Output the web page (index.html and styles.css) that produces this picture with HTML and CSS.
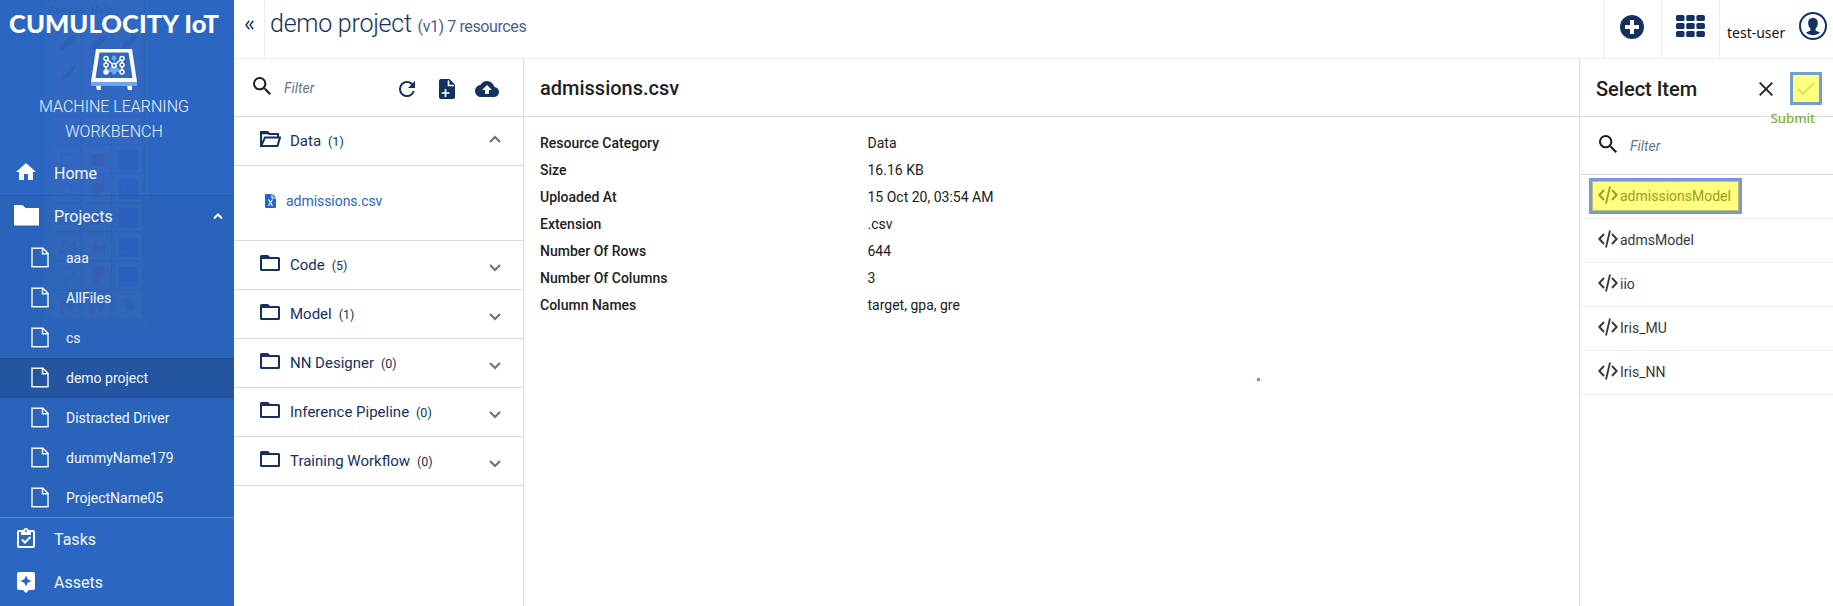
FILE: index.html
```
<!DOCTYPE html>
<html lang="en">
<head>
<meta charset="utf-8">
<title>Machine Learning Workbench</title>
<link rel="stylesheet" href="styles.css">
</head>
<body>
<svg class="defs" width="0" height="0">
  <symbol id="file" viewBox="0 0 18 21"><path d="M1 1.200h11l5 5v13.600H1z M11.500 1.500v5.200H17" fill="none" stroke="currentColor" stroke-width="1.500"/></symbol>
  <symbol id="folder" viewBox="0 0 20 16"><path d="M0 1.500Q0 0 1.500 0H8l2 2h8.500Q20 2 20 3.500v11Q20 16 18.500 16h-17Q0 16 0 14.500zM2 4v10h16V4z" fill="currentColor" fill-rule="evenodd"/></symbol>
  <symbol id="search" viewBox="3 3 17.500 17.500"><path d="M15.500 14h-.79l-.28-.27A6.471 6.471 0 0 0 16 9.500 6.500 6.500 0 1 0 9.500 16c1.610 0 3.090-.59 4.230-1.570l.27.28v.79l5 4.990L20.490 19l-4.990-5zm-6 0C7.010 14 5 11.990 5 9.500S7.010 5 9.500 5 14 7.010 14 9.500 11.990 14 9.500 14z" fill="currentColor"/></symbol>
  <symbol id="chev" viewBox="0 0 12 8"><path d="M1 1l5 5 5-5" fill="none" stroke="currentColor" stroke-width="2.200"/></symbol>
  <symbol id="code" viewBox="0 0 20 18"><path d="M6 4L1.300 9 6 14M14 4l4.700 5L14 14" fill="none" stroke="currentColor" stroke-width="2"/><path d="M12 .5L8 17.500" stroke="currentColor" stroke-width="1.800"/></symbol>
</svg>
<div class="app">
  <nav class="side">
    <svg class="ghost" width="104" height="325" viewBox="45 0 104 325">
      <defs>
        <pattern id="cells" x="53" y="31" width="31" height="29" patternUnits="userSpaceOnUse"><rect x="0" y="0" width="27" height="26" fill="#3b6cb9" opacity=".35"/><path d="M0 26.500h27.500V0" fill="none" stroke="#2456a5" opacity=".35"/></pattern>
      </defs>
      <path d="M45 0h104v325H45z" fill="#4675bd" opacity=".25"/>
      <path d="M49.500 0v322h95V0" fill="none" stroke="#2860b4" opacity=".5"/>
      <path d="M53 31h91v288H53z" fill="url(#cells)"/>
      <text x="49" y="13" class="ghost-text">Canvas</text><text x="91" y="13" class="ghost-text">Help</text>
      <g fill="none" stroke="#1e539f" opacity=".4">
        <path d="M134 4h10v14h-10z" stroke-dasharray="2 2"/>
        <path d="M60 50q4-12 16-15-1 9-16 15M91 50q4-12 16-15-1 9-16 15M121 50q4-12 16-15-1 9-16 15M60 80l7-7 8-8-3 9-9 5" fill="#1e539f"/>
        <path d="M60 108l14-13M92 108l14-13M58 130h14l-5-5v10l5-5M61.500 154.500h11v11h-11z"/><circle cx="67" cy="189" r="5.500"/>
        <path d="M62 214l10-3 3 7-5 6-10-1zM60 253l4-11 5 5 6-5-1 12-5-4zM61 273q4-7 11-3 5 4-3 9-5 4-3 7"/>
      </g>
      <g fill="#4a4b99" opacity=".4"><path d="M92 154h12v12H92z"/><circle cx="98" cy="189" r="6"/><path d="M92 214l10-3 3 7-5 6-10-1zM91 253l4-11 5 5 6-5-1 12-5-4zM92 270q4-5 12-2 5 4-4 10-1 6-7 6zM60 300h5v14h-5zM90 300h5v14h-5z"/></g>
      <g fill="#1d50c0" opacity=".4"><path d="M119 150h19v20h-19zM119 179h19v20h-19zM119 208h19v20h-19zM119 238h19v19h-19zM119 267h19v19h-19z"/></g>
      <g fill="#2557a0" opacity=".4"><path d="M63 301l6-4 6 10-6 6zM94 301l6-4 6 10-6 6zM122 301l6-4 8 10-6 6z"/></g>
      <g fill="none" stroke="#547fc0" stroke-dasharray="1 1.500" opacity=".5"><path d="M123 155h11v10h-11zM123 214l10-3 2 7-4 6-9-1zM122 253l4-11 5 5 5-5v12l-5-4z"/><circle cx="128.500" cy="189" r="5"/></g>
    </svg>
    <div class="brand">
      <div class="logo">CUMULOCITY IoT</div>
      <svg class="ml" width="46" height="41" viewBox="0 0 46 41">
        <path d="M0 33h46v4H0z" fill="#6aa9ee"/><path d="M5 37h5v4H6zM36 37h5v4h-4z" fill="#fff"/>
        <path d="M5 0h36l5 33H0zM8.500 3.500L4.500 29h37l-4-25.500z" fill="#fff" fill-rule="evenodd"/>
        <g stroke="#6aa9ee" fill="#6aa9ee"><path d="M15 23l8-7 8 7M23 9v14" stroke-width="1"/><circle cx="23" cy="9" r="2"/><circle cx="23" cy="23" r="2"/></g>
        <g stroke="#fff" fill="#2b65c2" stroke-width="1.500"><path d="M15 23V9.500l8 7 8-7V23" fill="none"/><circle cx="15" cy="9.500" r="2"/><circle cx="31" cy="9.500" r="2"/><circle cx="15" cy="16" r="2"/><circle cx="31" cy="16" r="2"/><circle cx="23" cy="16.500" r="2"/><circle cx="15" cy="23" r="2" fill="#fff"/><circle cx="31" cy="23" r="2"/></g>
      </svg>
      <div class="product">MACHINE LEARNING<br>WORKBENCH</div>
    </div>
    <a class="item"><span class="ic"><svg class="i-home" width="20" height="17" viewBox="2 3 20 17"><path d="M10 20v-6h4v6h5v-8h3L12 3 2 12h3v8z" fill="#fff"/></svg></span>Home</a>
    <div class="group">
      <a class="item"><span class="ic"><svg class="i-folder" width="25" height="21" viewBox="0 0 25 21"><path d="M0 0h8.500l3 3H25v17.500H0z" fill="#fff"/></svg></span>Projects<svg class="caret" width="10" height="7"><path d="M1 5.500l4-4 4 4" fill="none" stroke="#fff" stroke-width="2"/></svg></a>
      <a class="sub"><svg width="18" height="21"><use href="#file"/></svg>aaa</a>
      <a class="sub"><svg width="18" height="21"><use href="#file"/></svg>AllFiles</a>
      <a class="sub"><svg width="18" height="21"><use href="#file"/></svg>cs</a>
      <a class="sub on"><svg width="18" height="21"><use href="#file"/></svg>demo project</a>
      <a class="sub"><svg width="18" height="21"><use href="#file"/></svg>Distracted Driver</a>
      <a class="sub"><svg width="18" height="21"><use href="#file"/></svg>dummyName179</a>
      <a class="sub"><svg width="18" height="21"><use href="#file"/></svg>ProjectName05</a>
    </div>
    <a class="item"><span class="ic"><svg class="i-task" width="18" height="20" viewBox="0 0 18 20"><path d="M2 2h4.200a3 3 0 0 1 5.600 0H16q2 0 2 2v14q0 2-2 2H2q-2 0-2-2V4q0-2 2-2zm0 2v14h14V4h-2v3H4V4zm7-2a1 1 0 1 0 .01 0z" fill="#fff" fill-rule="evenodd"/><path d="M5 11.500l3 3L13.500 9" fill="none" stroke="#fff" stroke-width="2"/></svg></span>Tasks</a>
    <a class="item"><span class="ic"><svg class="i-asset" width="18" height="21" viewBox="0 0 18 21"><path d="M2 0h14q2 0 2 2v14q0 2-2 2h-4l-3 3-3-3H2q-2 0-2-2V2Q0 0 2 0zm7 3.500L7.300 7.300 3.500 9l3.800 1.700L9 14.500l1.700-3.800L14.500 9l-3.800-1.700z" fill="#fff" fill-rule="evenodd"/></svg></span>Assets</a>
  </nav>
  <div class="main">
    <header class="top">
      <div class="collapse"><svg width="9" height="10"><path d="M4.300.8L1 5l3.300 4.200M8.300.8L5 5l3.300 4.200" fill="none" stroke="#16325f" stroke-width="1.400"/></svg></div>
      <h1 class="title">demo project <small>(v1) 7 resources</small></h1>
      <div class="cell"><svg width="24" height="24"><circle cx="12" cy="12" r="12" fill="#14315f"/><path d="M12 5v14M5 12h14" stroke="#fff" stroke-width="4"/></svg></div>
      <div class="cell apps"><svg width="29" height="22" fill="#14315f"><rect width="8.500" height="6" rx="1.500"/><rect x="10.200" width="8.500" height="6" rx="1.500"/><rect x="20.400" width="8.500" height="6" rx="1.500"/><rect y="8" width="8.500" height="6" rx="1.500"/><rect x="10.200" y="8" width="8.500" height="6" rx="1.500"/><rect x="20.400" y="8" width="8.500" height="6" rx="1.500"/><rect y="16" width="8.500" height="6" rx="1.500"/><rect x="10.200" y="16" width="8.500" height="6" rx="1.500"/><rect x="20.400" y="16" width="8.500" height="6" rx="1.500"/></svg></div>
      <div class="user"><span>test-user</span><svg width="28" height="28"><circle cx="14" cy="14" r="13" fill="none" stroke="#14315f" stroke-width="2"/><path d="M14 6c3.500 0 5 2.300 4.800 5.500-.2 2.500-1.200 4.200-2.300 5.300v1.700l4.500 2c-2 2-4.500 2.700-7 2.700s-5-.7-7-2.700l4.500-2v-1.700c-1.100-1.100-2.100-2.800-2.300-5.300C9 8.300 10.500 6 14 6z" fill="#14315f"/></svg></div>
    </header>
    <div class="cols">
      <section class="res">
        <div class="tools">
          <svg class="s" width="18" height="18"><use href="#search"/></svg><span class="ph">Filter</span>
          <svg class="refresh" width="16" height="16" viewBox="4 4 16 16"><path d="M17.650 6.350A7.958 7.958 0 0 0 12 4a8 8 0 1 0 7.730 10h-2.080A5.990 5.990 0 0 1 12 18c-3.310 0-6-2.690-6-6s2.690-6 6-6c1.660 0 3.140.69 4.220 1.780L13 11h7V4z" fill="#14315f"/></svg>
          <svg class="add" width="16" height="20"><path d="M2 0h8.500L16 5.500V18q0 2-2 2H2q-2 0-2-2V2Q0 0 2 0z" fill="#14315f"/><path d="M9.500 1.500v5H15M6.500 10v8M2.500 14h8" fill="none" stroke="#fff" stroke-width="1.700"/></svg>
          <svg class="cloud" width="24" height="16" viewBox="0 4 24 16"><path d="M19.350 10.040A7.490 7.490 0 0 0 12 4C9.110 4 6.600 5.640 5.350 8.040A5.994 5.994 0 0 0 0 14c0 3.310 2.690 6 6 6h13c2.760 0 5-2.240 5-5 0-2.640-2.050-4.780-4.650-4.960zM14 13v4h-4v-4H7l5-5 5 5h-3z" fill="#14315f"/></svg>
        </div>
        <div class="acc open"><svg width="21" height="16" viewBox="0 0 21 16"><path d="M1 15V1h6.500l2 2h8.500v2.500M1 15L5 6.500h15L17.500 15z" fill="none" stroke="#14315f" stroke-width="2"/><path d="M1 1h7l1.500 2.200H1z" fill="#14315f"/></svg>Data<small>(1)</small><svg class="ch up" width="12" height="8"><use href="#chev"/></svg></div>
        <div class="csv"><svg width="11" height="14"><path d="M1 0h6.500L11 3.500V13q0 1-1 1H1q-1 0-1-1V1q0-1 1-1z" fill="#2766c4"/><path d="M7 .5V4h4M3.500 5.500l4 6.500M7.500 5.500l-4 6.500" fill="none" stroke="#fff" stroke-width="1.100"/></svg>admissions.csv</div>
        <div class="acc"><svg width="20" height="16"><use href="#folder"/></svg>Code<small>(5)</small><svg class="ch" width="12" height="8"><use href="#chev"/></svg></div>
        <div class="acc"><svg width="20" height="16"><use href="#folder"/></svg>Model<small>(1)</small><svg class="ch" width="12" height="8"><use href="#chev"/></svg></div>
        <div class="acc"><svg width="20" height="16"><use href="#folder"/></svg>NN Designer<small>(0)</small><svg class="ch" width="12" height="8"><use href="#chev"/></svg></div>
        <div class="acc"><svg width="20" height="16"><use href="#folder"/></svg>Inference Pipeline<small>(0)</small><svg class="ch" width="12" height="8"><use href="#chev"/></svg></div>
        <div class="acc"><svg width="20" height="16"><use href="#folder"/></svg>Training Workflow<small>(0)</small><svg class="ch" width="12" height="8"><use href="#chev"/></svg></div>
      </section>
      <section class="detail">
        <h2 class="head">admissions.csv</h2>
        <dl class="props">
          <dt>Resource Category</dt><dd>Data</dd>
          <dt>Size</dt><dd>16.16 KB</dd>
          <dt>Uploaded At</dt><dd>15 Oct 20, 03:54 AM</dd>
          <dt>Extension</dt><dd>.csv</dd>
          <dt>Number Of Rows</dt><dd>644</dd>
          <dt>Number Of Columns</dt><dd>3</dd>
          <dt>Column Names</dt><dd>target, gpa, gre</dd>
        </dl>
        <i class="dot"></i>
      </section>
      <section class="pick">
        <div class="pick-head"><h2>Select Item</h2><svg class="x" width="14" height="14"><path d="M.7.7l12.600 12.600M13.300.7L.7 13.300" stroke="#212121" stroke-width="1.900"/></svg><span class="ok"><svg width="18" height="13"><path d="M1 7l5 5L17 1" fill="none" stroke="#dede5c" stroke-width="1.800"/></svg></span><span class="tip">Submit</span></div>
        <div class="find"><svg class="s" width="18" height="18"><use href="#search"/></svg><span class="ph">Filter</span></div>
        <div class="opt hl"><svg width="20" height="18"><use href="#code"/></svg>admissionsModel</div>
        <div class="opt"><svg width="20" height="18"><use href="#code"/></svg>admsModel</div>
        <div class="opt"><svg width="20" height="18"><use href="#code"/></svg>iio</div>
        <div class="opt"><svg width="20" height="18"><use href="#code"/></svg>Iris_MU</div>
        <div class="opt"><svg width="20" height="18"><use href="#code"/></svg>Iris_NN</div>
      </section>
    </div>
  </div>
</div>
</body>
</html>
```
FILE: styles.css
```
*, *::before { box-sizing: border-box; }
body { margin: 0; font-family: Roboto, sans-serif; color: #212121; background: #fff; overflow: hidden; }
h1, h2, dl, dd { margin: 0; }
svg { flex: none; display: block; }
.defs { position: absolute; }
.app { display: flex; height: 606px; }

.side { position: relative; width: 234px; flex: none; background: #2b66c3; color: #fff; }
.ghost { position: absolute; left: 45px; top: 0; z-index: 1; opacity: .7; }
.ghost-text { font: 9.500px "DejaVu Sans", sans-serif; fill: #2456a5; opacity: .8; }
.brand, .item, .sub { position: relative; z-index: 2; }
.brand { height: 152px; display: flex; flex-direction: column; align-items: center; }
.logo { height: 49px; padding-top: 8px; padding-right: 6px; font: 900 25.500px/30px Lato, sans-serif; white-space: nowrap; letter-spacing: .1px; }
.ml { margin-right: 6px; }
.product { margin-top: 4px; padding-right: 6px; font-size: 16px; font-weight: 300; line-height: 25px; text-align: center; color: #e9effa; }
.item { display: flex; align-items: center; height: 43px; font-size: 16px; color: #f2f6fc; }
.ic { width: 54px; padding-left: 14px; display: flex; }
.i-home, .i-task, .i-asset { margin-left: 3px; }
.i-home { margin-left: 2px; margin-top: -4px; }
.i-folder { margin-top: -1px; }
.i-task { margin-top: -3px; }
.caret { margin-left: auto; margin-right: 11px; }
.group { background: #2963ba; border-top: 1px solid #2456a4; border-bottom: 1px solid #5383ce; height: 323px; }
.sub { display: flex; align-items: center; height: 40px; padding: 0 0 1px 31px; gap: 17px; font-size: 14px; color: #f2f6fc; }
.sub svg { margin-top: -1px; }
.group .item { height: 42px; padding-bottom: 2px; }
.on { background: #2355a1; border-top: 1px solid #1d4685; padding-bottom: 2px; }

.main { flex: 1; display: flex; flex-direction: column; min-width: 0; }
.top { height: 59px; display: flex; border-bottom: 1px solid #eee; flex: none; }
.collapse { width: 31px; border-right: 1px solid #eee; padding: 20px 0 0 11px; }
.title { flex: 1; padding-left: 5px; font-size: 25px; font-weight: 300; letter-spacing: -.25px; line-height: 48px; color: #14315f; white-space: nowrap; }
.title small { font-size: 16px; font-weight: 400; letter-spacing: -.4px; color: #465f8d; }
.cell { width: 58px; border-left: 1px solid #eee; padding: 15px 0 0 16px; }
.apps { padding-left: 14px; }
.user { width: 114px; border-left: 1px solid #eee; display: flex; padding: 12px 6px 0 7px; justify-content: space-between; font: 14px/20px "Noto Sans", sans-serif; color: #111; }
.user span { padding-top: 11px; }

.cols { flex: 1; display: flex; }
.res { width: 290px; border-right: 1px solid #dcdcdc; flex: none; }
.tools { height: 58px; border-bottom: 1px solid #dcdcdc; display: flex; align-items: center; padding: 2px 0 0 19px; }
.s { color: #1c1c1c; }
.tools .s { margin-top: -6px; }
.ph { font-size: 14px; font-style: italic; color: #67788f; margin-left: 13px; }
.tools .ph { width: 115px; margin-top: -2px; }
.refresh { margin-right: 24px; }
.add { margin-right: 20px; }
.acc { height: 49px; border-bottom: 1px solid #dcdcdc; display: flex; align-items: center; padding: 0 22px 0 26px; font-size: 15px; color: #14315f; }
.acc svg:first-child { margin: -5px 10px 0 0; }
.acc.open svg:first-child { margin-right: 9px; }
.acc small { font-size: 12.500px; margin: 1px 0 0 7px; }
.acc .ch { margin-left: auto; margin-top: 5px; color: #757575; width: 12px; }
.acc .ch.up { transform: rotate(180deg); margin-top: -4px; }
.csv { height: 75px; border-bottom: 1px solid #dcdcdc; display: flex; align-items: center; gap: 10px; padding: 0 0 5px 31px; font-size: 14px; letter-spacing: -.05px; color: #2766c4; }

.detail { flex: 1; position: relative; }
.head, .pick-head h2 { font-size: 20px; font-weight: 500; }
.head { height: 58px; line-height: 59px; padding-left: 16px; border-bottom: 1px solid #dcdcdc; }
.props { display: grid; grid-template-columns: 327.500px 1fr; grid-auto-rows: 27px; padding: 13px 0 0 16px; font-size: 14px; line-height: 27px; }
.props dt { font-weight: 500; }
.dot { position: absolute; left: 733px; top: 319px; width: 3px; height: 3px; background: #8a80ff; }

.pick { width: 254px; border-left: 1px solid #dcdcdc; flex: none; }
.pick-head { position: relative; height: 58px; border-bottom: 1px solid #dcdcdc; display: flex; align-items: center; padding: 2px 0 0 16px; }
.x { margin-left: auto; margin-right: 17px; }
.ok { width: 32px; height: 33px; margin-right: 11px; border: 3px solid #729fcf; background: #ffff80; display: flex; align-items: center; justify-content: center; }
.tip { position: absolute; right: 18px; top: 51px; font: 400 13px/16px "Noto Sans", sans-serif; letter-spacing: .2px; color: #6fa0b5; text-shadow: 0 0 1px #ef0, 0 0 1px #ef0; }
.find { height: 58px; border-bottom: 1px solid #dcdcdc; display: flex; align-items: center; padding-left: 19px; }
.find .s { margin-top: -4px; }
.opt { position: relative; height: 44px; border-bottom: 1px solid #eee; display: flex; align-items: center; gap: 2px; padding: 0 0 1px 18px; font-size: 14px; color: #383838; }
.opt svg { margin-top: -2px; }
.hl { color: #9c9c1e; z-index: 0; }
.hl::before { content: ""; position: absolute; z-index: -1; left: 9px; top: 3px; width: 153px; height: 36px; background: #ffff80; border: 3px solid #729fcf; box-shadow: inset 0 0 0 1px #c4bd72; outline: 1px solid #8c88f5; outline-offset: -1px; }
```
